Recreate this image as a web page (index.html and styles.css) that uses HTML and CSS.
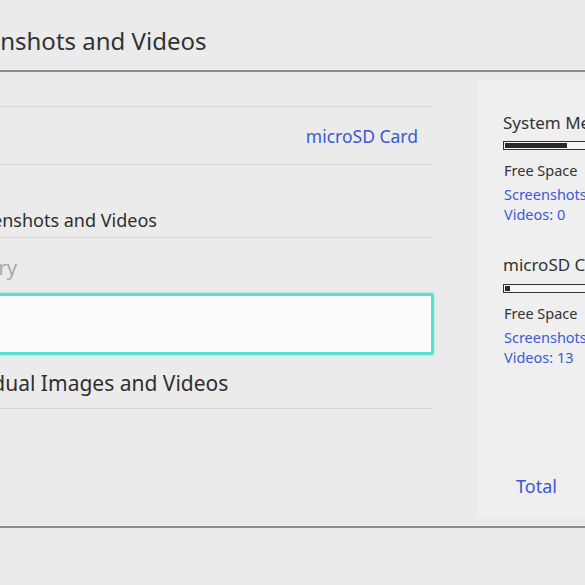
FILE: index.html
```html
<!DOCTYPE html>
<html lang="en">

<head>
  <meta charset="UTF-8">
  <title>Manage Screenshots and Videos</title>
  <link rel="stylesheet" href="styles.css">
</head>

<body>
  <header class="top">
    <h1>Screenshots and Videos</h1>
  </header>

  <main class="main">
    <div class="list">
      <div class="row">
        <span class="label">Save Location</span>
        <span class="value">microSD Card</span>
      </div>
      <div class="row row-copy">
        <span class="label">Copy All Screenshots and Videos</span>
      </div>
      <div class="row row-off">
        <span class="label">System Memory</span>
      </div>
      <div class="row row-focus">
        <span class="label">Delete</span>
      </div>
      <div class="row row-manage">
        <span class="label">Manage Individual Images and Videos</span>
      </div>
    </div>

    <aside class="panel">
      <div class="storage">
        <h3>System Memory</h3>
        <div class="bar"><div class="fill" style="width: 62px"></div></div>
        <div class="free">Free Space</div>
        <div class="count">Screenshots: 0</div>
        <div class="count">Videos: 0</div>
      </div>
      <div class="storage second">
        <h3>microSD Card</h3>
        <div class="bar"><div class="fill" style="width: 5px"></div></div>
        <div class="free">Free Space</div>
        <div class="count">Screenshots: 0</div>
        <div class="count">Videos: 13</div>
      </div>
      <div class="total">Total</div>
    </aside>
  </main>

  <footer class="bottom"></footer>
</body>

</html>
```

FILE: styles.css
```css
body {
  margin: 0;
  width: 585px;
  height: 585px;
  overflow: hidden;
  background: #ebebeb;
  font-family: "Noto Sans", "Open Sans", sans-serif;
  color: #2f2f2f;
  display: flex;
  flex-direction: column;
}

.top {
  height: 72px;
  box-sizing: border-box;
  padding-top: 10px;
  border-bottom: 2px solid #8d8d8d;
  display: flex;
  align-items: center;
}

.top h1 {
  margin: 0 0 0 -61px;
  font-size: 24px;
  font-weight: 400;
  white-space: nowrap;
  color: #333;
}

.main {
  height: 454px;
  border-bottom: 2px solid #8d8d8d;
  display: flex;
  gap: 46px;
}

/* left list, cropped on the left */
.list {
  margin-left: -300px;
  width: 732px;
  flex-shrink: 0;
  padding-top: 34px;
}

.row {
  display: flex;
  align-items: center;
  justify-content: space-between;
  border-top: 1px solid #d5d5d5;
  height: 57px;
  padding-right: 14px;
  white-space: nowrap;
  font-size: 18px;
}

.row .value {
  color: #3b58d4;
  font-size: 17.5px;
}

.row-copy {
  height: 73px;
  align-items: flex-end;
  padding-bottom: 5px;
  box-sizing: border-box;
}

.row-copy .label {
  margin-left: 184px;
}

.row-off {
  height: 56px;
  font-size: 20px;
  color: #a8a8a8;
  align-items: flex-start;
  padding-top: 16px;
  box-sizing: border-box;
}

.row-off .label {
  margin-left: 165px;
}

.row-focus {
  border: 3px solid #55e2cf;
  border-radius: 2px;
  background: #fbfbfb;
  height: 56px;
  margin-right: -2px;
  box-shadow: 0 0 3px rgba(85, 226, 207, 0.6);
}

.row-manage {
  border-top: none;
  border-bottom: 1px solid #d5d5d5;
  height: 54px;
  font-size: 21px;
  padding-top: 2px;
  box-sizing: border-box;
}

.row-manage .label {
  margin-left: 152px;
}

/* storage info on the right */
.panel {
  flex: 1;
  margin: 8px 0;
  background: #efefef;
  padding: 33px 0 22px 25px;
  display: flex;
  flex-direction: column;
  white-space: nowrap;
}

.storage h3 {
  margin: 0;
  font-size: 17px;
  font-weight: 400;
  line-height: 20px;
  color: #333;
}

.bar {
  margin-top: 8px;
  height: 7px;
  width: 200px;
  border: 1px solid #333;
  background: #f5f5f5;
  padding: 0 1px;
  display: flex;
  align-items: center;
}

.bar .fill {
  height: 5px;
  background: #2a2a2a;
}

.free {
  margin-top: 10px;
  margin-left: 1px;
  font-size: 14.5px;
  line-height: 20px;
  color: #333;
}

.count {
  margin-left: 1px;
  font-size: 14.5px;
  line-height: 20px;
  color: #3d5ad6;
}

.free + .count {
  margin-top: 4px;
}

.second {
  margin-top: 31px;
}

.second .bar {
  margin-top: 9px;
}

.total {
  margin-top: auto;
  margin-left: 13px;
  font-size: 18px;
  line-height: 20px;
  color: #3b58d4;
}

.bottom {
  flex: 1;
}
```
